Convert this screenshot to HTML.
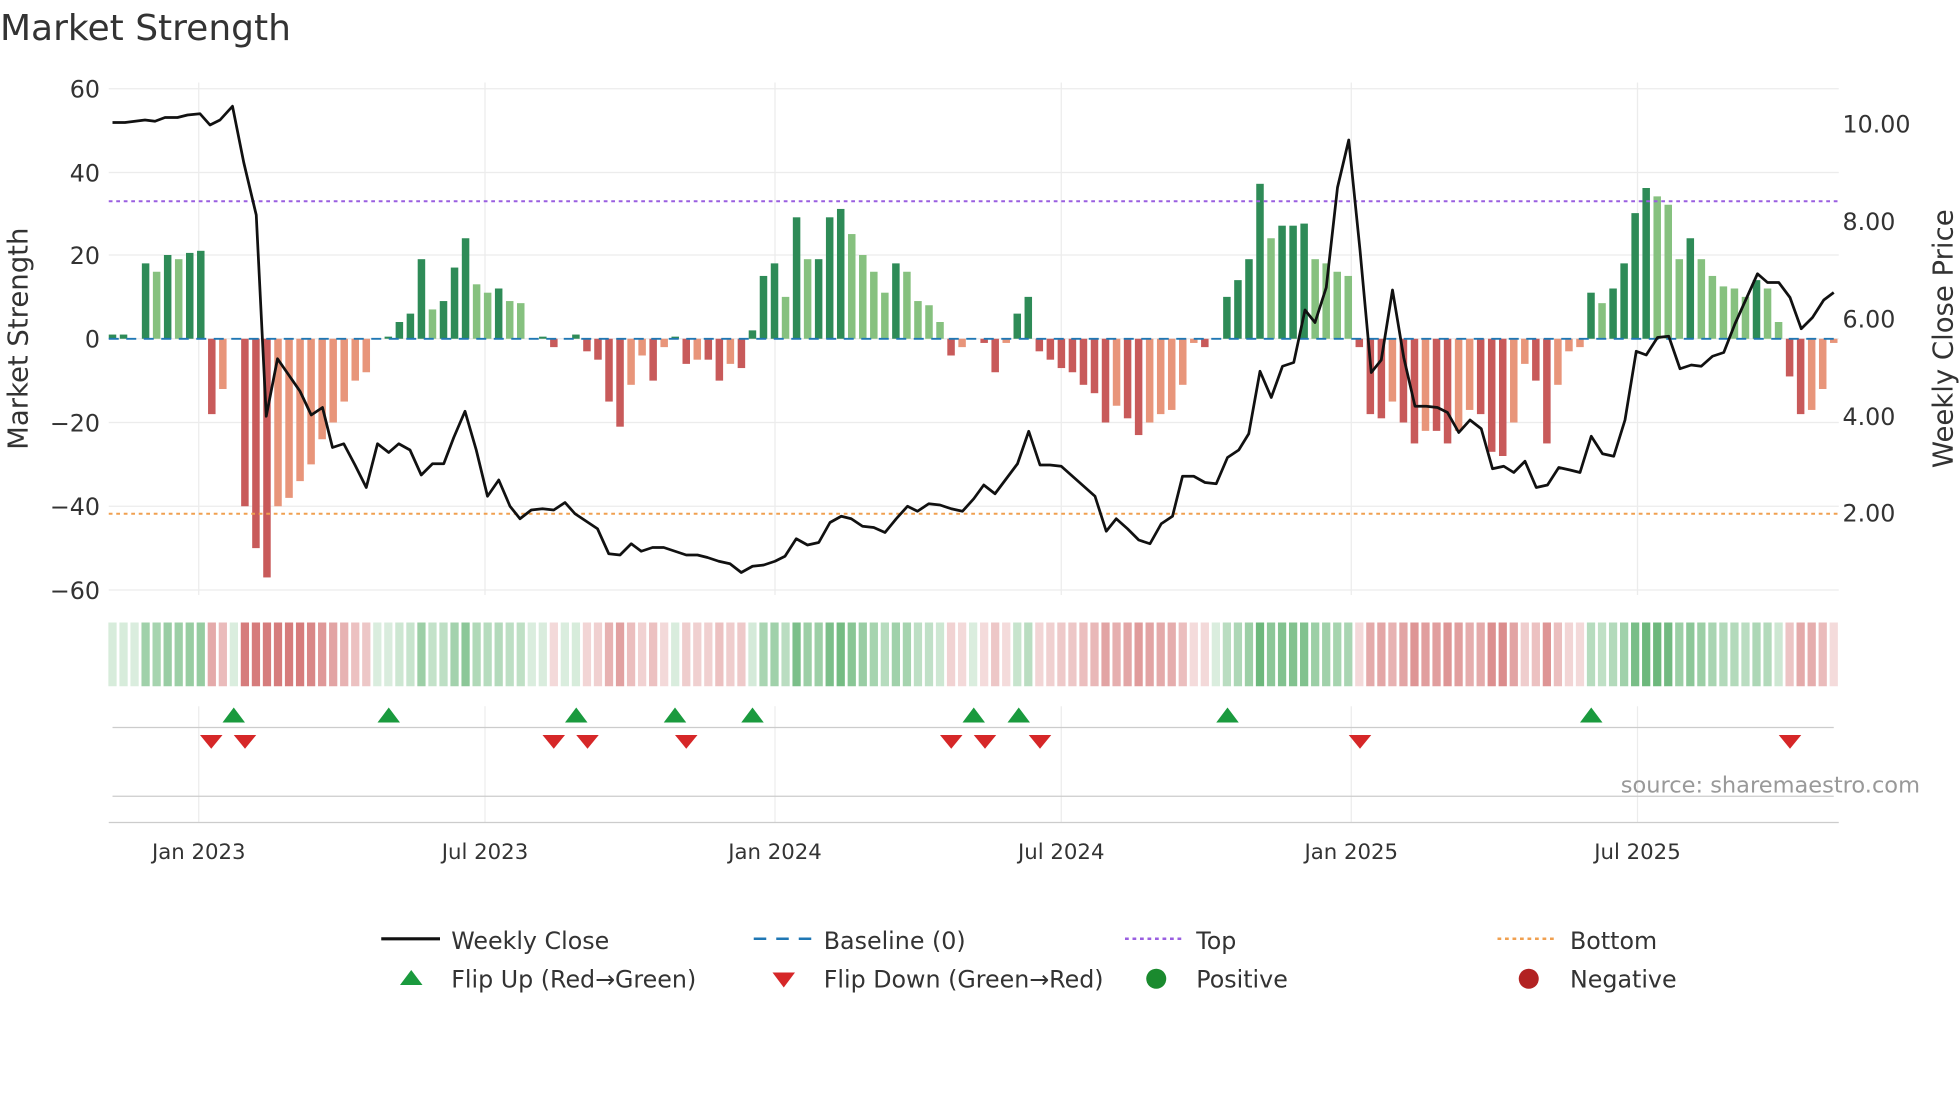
<!DOCTYPE html>
<html><head><meta charset="utf-8"><style>
html,body{margin:0;padding:0;background:#fff;}
svg{display:block;}
text{font-family:"DejaVu Sans","Liberation Sans",sans-serif;}
</style></head><body>
<svg id="s" width="1960" height="1102" viewBox="0 0 1568 881.6" xmlns="http://www.w3.org/2000/svg">
<rect width="1568" height="882" fill="#fff"/>
<text x="0" y="32" font-size="28.8" fill="#333">Market Strength</text>
<g id="grid" stroke="#ececec" stroke-width="1"></g>
<g id="bars"></g>
<g id="heat"></g>
<line x1="87" y1="161" x2="1471" y2="161" stroke="#9a5fe0" stroke-width="1.6" stroke-dasharray="3,3"/>
<line x1="87" y1="411" x2="1471" y2="411" stroke="#f0a050" stroke-width="1.6" stroke-dasharray="3,3"/>
<line x1="87" y1="271" x2="1471" y2="271" stroke="#1f77b4" stroke-width="1.5" stroke-dasharray="8,6"/>
<polyline id="price" fill="none" stroke="#111" stroke-width="2.2" stroke-linejoin="round"/>
<g font-size="19" fill="#333" text-anchor="end">
<text x="80" y="78">60</text><text x="80" y="145">40</text><text x="80" y="211">20</text><text x="80" y="278">0</text>
<text x="80" y="345">−20</text><text x="80" y="412">−40</text><text x="80" y="479">−60</text>
</g>
<g font-size="19" fill="#333">
<text x="1474" y="106">10.00</text><text x="1474" y="184">8.00</text><text x="1474" y="262">6.00</text>
<text x="1474" y="340">4.00</text><text x="1474" y="417">2.00</text>
</g>
<text transform="translate(22,271) rotate(-90)" font-size="22" fill="#333" text-anchor="middle">Market Strength</text>
<text transform="translate(1562,271) rotate(-90)" font-size="22" fill="#333" text-anchor="middle">Weekly Close Price</text>
<line x1="90" y1="582" x2="1467" y2="582" stroke="#ccc"/>
<line x1="90" y1="637" x2="1467" y2="637" stroke="#ccc"/>
<line x1="87" y1="658" x2="1471" y2="658" stroke="#ccc"/>
<g id="marks"></g>
<text x="1536" y="634" font-size="18" fill="#999" text-anchor="end">source: sharemaestro.com</text>
<g font-size="17" fill="#333" text-anchor="middle">
<text x="159" y="687">Jan 2023</text><text x="388" y="687">Jul 2023</text><text x="620" y="687">Jan 2024</text>
<text x="849" y="687">Jul 2024</text><text x="1081" y="687">Jan 2025</text><text x="1310" y="687">Jul 2025</text>
</g>
<g font-size="19" fill="#333">
<line x1="305" y1="751" x2="352" y2="751" stroke="#111" stroke-width="2.5"/><text x="361" y="759">Weekly Close</text>
<line x1="603" y1="751" x2="650" y2="751" stroke="#1f77b4" stroke-width="2" stroke-dasharray="10,8"/><text x="659" y="759">Baseline (0)</text>
<line x1="900" y1="751" x2="947" y2="751" stroke="#9a5fe0" stroke-width="2" stroke-dasharray="3,3"/><text x="957" y="759">Top</text>
<line x1="1198" y1="751" x2="1245" y2="751" stroke="#f0a050" stroke-width="2" stroke-dasharray="3,3"/><text x="1256" y="759">Bottom</text>
<polygon points="320,788 338,788 329,776" fill="#1a9a3e"/><text x="361" y="790">Flip Up (Red→Green)</text>
<polygon points="618,778 636,778 627,790" fill="#d62728"/><text x="659" y="790">Flip Down (Green→Red)</text>
<circle cx="925" cy="783" r="8" fill="#1a8a2e"/><text x="957" y="790">Positive</text>
<circle cx="1223" cy="783" r="8" fill="#b22222"/><text x="1256" y="790">Negative</text>
</g>
</svg>
<script>
var NS="http://www.w3.org/2000/svg";
function el(p,t,a){var e=document.createElementNS(NS,t);for(var k in a)e.setAttribute(k,a[k]);document.getElementById(p).appendChild(e);return e;}
[71,138,204,271,338,405,472].forEach(function(y){el("grid","line",{x1:87,x2:1471,y1:y,y2:y});});
[159,388,620,849,1081,1310].forEach(function(x){el("grid","line",{x1:x,x2:x,y1:66,y2:476});el("grid","line",{x1:x,x2:x,y1:565,y2:658});});
var v=[1,1,0,18,16,20,19,20.5,21,-18,-12,0,-40,-50,-57,-40,-38,-34,-30,-24,-20,-15,-10,-8,0,0.5,4,6,19,7,9,17,24,13,11,12,9,8.5,0,0.5,-2,0,1,-3,-5,-15,-21,-11,-4,-10,-2,0.5,-6,-5,-5,-10,-6,-7,2,15,18,10,29,19,19,29,31,25,20,16,11,18,16,9,8,4,-4,-2,0,-1,-8,-1,6,10,-3,-5,-7,-8,-11,-13,-20,-16,-19,-23,-20,-18,-17,-11,-1,-2,0,10,14,19,37,24,27,27,27.5,19,18,16,15,-2,-18,-19,-15,-20,-25,-22,-22,-25,-22,-17,-18,-27,-28,-20,-6,-10,-25,-11,-3,-2,11,8.5,12,18,30,36,34,32,19,24,19,15,12.5,12,10,14,12,4,-9,-18,-17,-12,-1];
var step=(1467-90)/(v.length-1),k=3.35;
v.forEach(function(val,i){
 var x=90+i*step,p=i?v[i-1]:0,dark=(val*p<=0)||Math.abs(val)>=Math.abs(p);
 var c=val>=0?(dark?"#2e8b57":"#86c17f"):(dark?"#c85a5a":"#e8957a");
 var h=Math.abs(val)*k,y=val>=0?271-h:271;
 if(h>0.3)el("bars","rect",{x:x-3,y:y,width:6,height:h,fill:c});
 var a=Math.min(1,0.25+Math.abs(val)/45);
 var hc=val>=0?"rgba(60,160,80,"+a*0.75+")":"rgba(200,80,80,"+a*0.75+")";
 el("heat","rect",{x:x-3.3,y:498,width:6.6,height:51,fill:hc});
});
var pts=[90,98,100,98,108,97,116,96,124,97,132,94,142,94,150,92,160,91,168,100,176,96,186,85,195,130,205,172,213,333,222,287,231,300,240,313,249,332,258,326,266,358,275,355,284,372,293,390,302,355,311,362,319,355,328,360,337,380,346,371,355,371,363,350,372,329,381,360,390,397,399,384,408,405,416,415,425,408,434,407,443,408,452,402,460,411,469,417,478,423,487,443,496,444,505,435,513,441,522,438,531,438,540,441,549,444,558,444,566,446,575,449,584,451,593,458,602,453,611,452,620,449,628,445,637,431,646,436,655,434,664,418,673,413,681,415,690,421,699,422,708,426,717,415,726,405,734,409,743,403,752,404,761,407,770,409,779,399,787,388,796,395,805,383,814,371,823,345,832,372,840,372,849,373,858,381,867,389,876,397,885,425,893,415,902,423,911,432,920,435,929,419,938,413,946,381,955,381,964,386,973,387,982,366,991,360,999,347,1008,297,1017,318,1026,293,1035,290,1044,248,1052,258,1061,230,1070,150,1079,112,1088,200,1097,298,1105,288,1114,232,1123,286,1132,325,1141,325,1150,326,1158,330,1167,346,1176,336,1185,343,1194,375,1203,373,1211,378,1220,369,1229,390,1238,388,1247,374,1256,376,1264,378,1273,349,1282,363,1291,365,1300,336,1309,281,1317,284,1326,270,1335,269,1344,295,1353,292,1361,293,1370,285,1379,282,1388,259,1397,239,1406,219,1414,226,1423,226,1432,238,1441,263,1450,254,1459,240,1467,234];
var s="";for(var i=0;i<pts.length;i+=2)s+=pts[i]+","+pts[i+1]+" ";
document.getElementById("price").setAttribute("points",s);
[187,311,461,540,602,779,815,982,1273].forEach(function(x){el("marks","polygon",{points:(x-9)+",578 "+(x+9)+",578 "+x+",566",fill:"#1a9a3e"});});
[169,196,443,470,549,761,788,832,1088,1432].forEach(function(x){el("marks","polygon",{points:(x-9)+",588 "+(x+9)+",588 "+x+",599",fill:"#d62728"});});
</script>
</body></html>
